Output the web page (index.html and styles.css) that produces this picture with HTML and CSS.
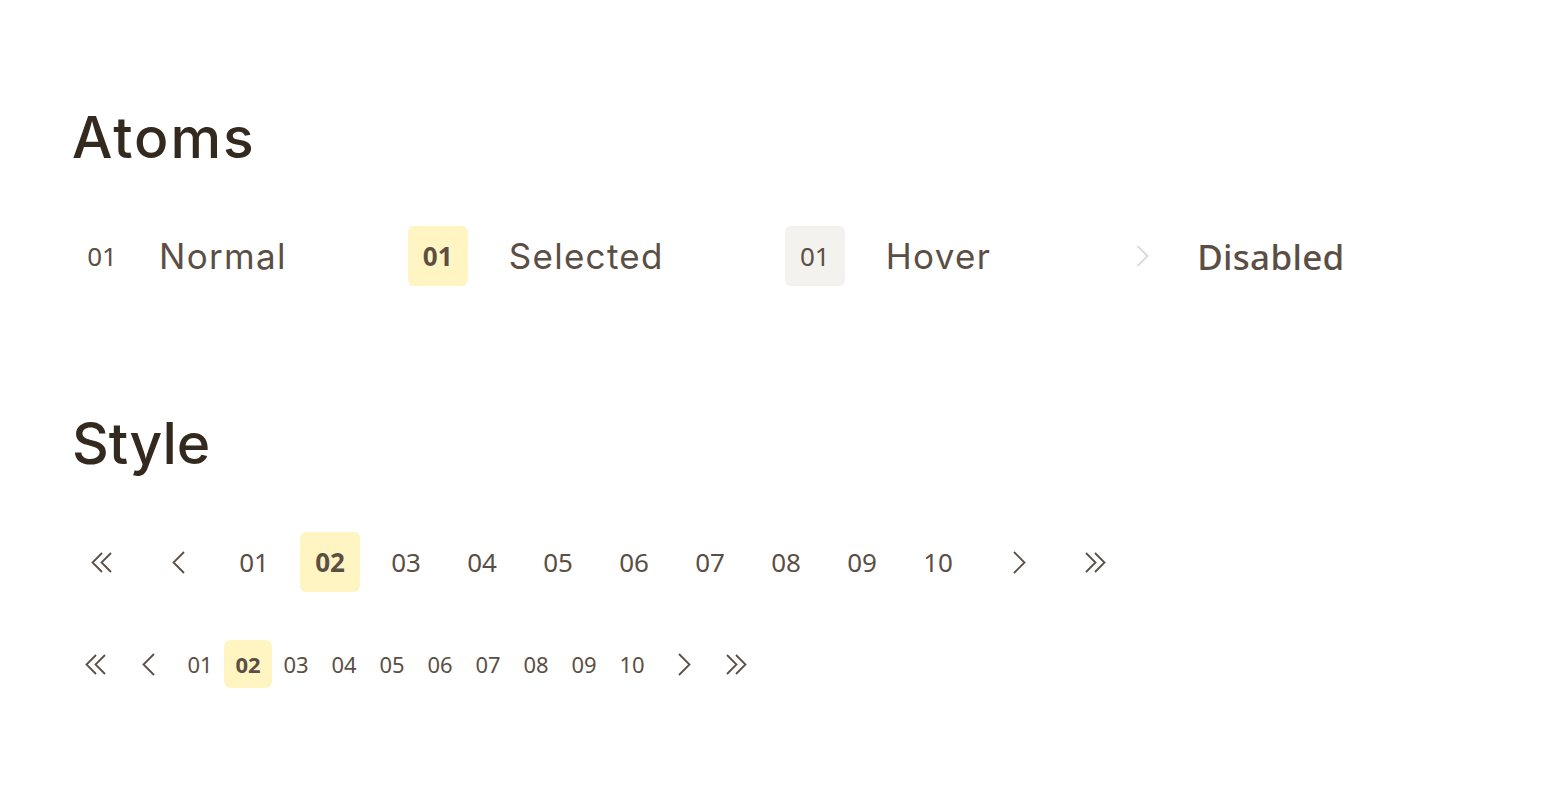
FILE: index.html
```html
<!DOCTYPE html>
<html>
<head>
<meta charset="utf-8">
<link rel="stylesheet" href="styles.css">
</head>
<body>
<main class="page">
  <section class="section atoms-section">
    <h1 class="title">Atoms</h1>
    <div class="atoms">
      <div class="atom">
        <span class="cell">01</span>
        <span class="label label-normal">Normal</span>
      </div>
      <div class="atom">
        <span class="cell selected">01</span>
        <span class="label label-wide">Selected</span>
      </div>
      <div class="atom">
        <span class="cell hover">01</span>
        <span class="label label-wide">Hover</span>
      </div>
      <div class="atom">
        <span class="cell disabled">
          <svg width="13" height="22" viewBox="0 0 13 22"><path d="M1.5 1 L11.5 11 L1.5 21" fill="none" stroke="currentColor" stroke-width="1.6"/></svg>
        </span>
        <span class="label label-disabled">Disabled</span>
      </div>
    </div>
  </section>

  <section class="section style-section">
    <h1 class="title title-tight">Style</h1>
    <div class="pager pager-lg">
      <span class="cell"><svg width="22" height="21" viewBox="0 0 22 21"><path d="M11 1 L1.5 10.5 L11 20 M20 1 L10.5 10.5 L20 20" fill="none" stroke="currentColor" stroke-width="1.8"/></svg></span>
      <span class="cell"><svg width="13" height="23" viewBox="0 0 13 23"><path d="M12 1 L1.5 11.5 L12 22" fill="none" stroke="currentColor" stroke-width="1.8"/></svg></span>
      <span class="cell">01</span>
      <span class="cell selected">02</span>
      <span class="cell">03</span>
      <span class="cell">04</span>
      <span class="cell">05</span>
      <span class="cell">06</span>
      <span class="cell">07</span>
      <span class="cell">08</span>
      <span class="cell">09</span>
      <span class="cell">10</span>
      <span class="cell shift"><svg width="13" height="23" viewBox="0 0 13 23"><path d="M1 1 L11.5 11.5 L1 22" fill="none" stroke="currentColor" stroke-width="1.8"/></svg></span>
      <span class="cell shift"><svg width="22" height="21" viewBox="0 0 22 21"><path d="M2 1 L11.5 10.5 L2 20 M11 1 L20.5 10.5 L11 20" fill="none" stroke="currentColor" stroke-width="1.8"/></svg></span>
    </div>
    <div class="pager pager-sm">
      <span class="cell arrow"><svg width="22" height="21" viewBox="0 0 22 21"><path d="M11 1 L1.5 10.5 L11 20 M20 1 L10.5 10.5 L20 20" fill="none" stroke="currentColor" stroke-width="1.8"/></svg></span>
      <span class="cell arrow"><svg width="13" height="23" viewBox="0 0 13 23"><path d="M12 1 L1.5 11.5 L12 22" fill="none" stroke="currentColor" stroke-width="1.8"/></svg></span>
      <span class="nums">
        <span class="cell">01</span>
        <span class="cell selected">02</span>
        <span class="cell">03</span>
        <span class="cell">04</span>
        <span class="cell">05</span>
        <span class="cell">06</span>
        <span class="cell">07</span>
        <span class="cell">08</span>
        <span class="cell">09</span>
        <span class="cell">10</span>
      </span>
      <span class="cell arrow"><svg width="13" height="23" viewBox="0 0 13 23"><path d="M1 1 L11.5 11.5 L1 22" fill="none" stroke="currentColor" stroke-width="1.8"/></svg></span>
      <span class="cell arrow"><svg width="22" height="21" viewBox="0 0 22 21"><path d="M2 1 L11.5 10.5 L2 20 M11 1 L20.5 10.5 L11 20" fill="none" stroke="currentColor" stroke-width="1.8"/></svg></span>
    </div>
  </section>
</main>
</body>
</html>
```

FILE: styles.css
```css
html, body {
  margin: 0;
  padding: 0;
  background: #ffffff;
}

.page {
  padding: 106px 0 0 72px;
  color: #5b4f45;
  font-family: "Noto Sans", "Open Sans", sans-serif;
}

.title {
  margin: 0;
  font-family: Inter, "Noto Sans", sans-serif;
  font-weight: 500;
  font-size: 57px;
  line-height: 64px;
  letter-spacing: 2px;
  color: #33291f;
}

.title-tight {
  letter-spacing: 0;
}

.atoms {
  display: flex;
  align-items: center;
  gap: 121px;
  margin-top: 56px;
}

.atom {
  display: flex;
  align-items: center;
}

.cell {
  width: 60px;
  height: 60px;
  border-radius: 6px;
  display: flex;
  align-items: center;
  justify-content: center;
  font-size: 26px;
  color: #5b4f45;
  flex: none;
}

.cell.selected {
  background: #fff5c2;
  font-weight: 700;
}

.cell.hover {
  background: #f4f2ef;
}

.cell.disabled {
  color: #d6d2cd;
}

.label {
  font-family: Inter, "Noto Sans", sans-serif;
  font-size: 35px;
  color: #5b4f45;
  letter-spacing: 1.3px;
}

.label-normal {
  margin-left: 27px;
}

.label-wide {
  margin-left: 41px;
}

.label-disabled {
  margin-left: 25px;
  font-family: "Noto Sans", sans-serif;
  font-weight: 500;
  font-size: 35px;
  letter-spacing: 0.3px;
}

.style-section {
  margin-top: 126px;
}

.pager {
  display: flex;
  align-items: center;
}

.pager-lg {
  gap: 16px;
  margin-top: 56px;
}

.pager-lg .shift {
  transform: translateX(5px);
}

.pager-sm {
  gap: 4px;
  margin-top: 48px;
}

.pager-sm .nums {
  display: flex;
}

.pager-sm .cell {
  width: 48px;
  height: 48px;
  font-size: 22px;
}
```
